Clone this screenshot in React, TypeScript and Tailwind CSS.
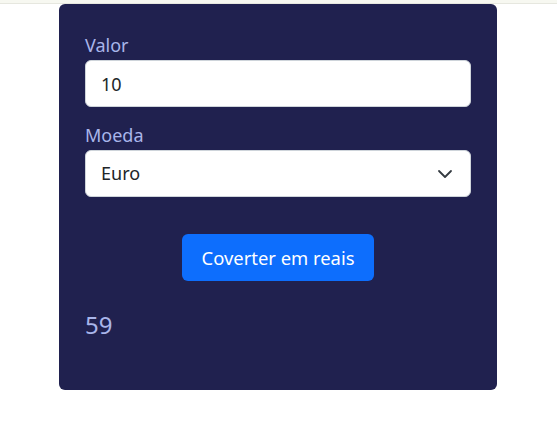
import React, { useState } from 'react';

const App = () => {
    const [valor, setValor] = useState('10');
    const [moeda, setMoeda] = useState('Euro');
    return (
        <div className="min-h-[431px] bg-white" style={{ fontFamily: '"Noto Sans", "Open Sans", sans-serif' }}>
            <div className="h-[4px] bg-[#f7f8f1] border-b border-[#e6e7df]"></div>
            <div className="flex justify-center pr-[1px]">
                <div className="w-[438px] bg-[#20214f] rounded-[6px] px-[26px] pt-[28px] pb-[49px]">
                    <label className="block text-[18px] leading-[26px] text-[#a9b5ea] mb-[2px]">Valor</label>
                    <input
                        className="block w-full h-[47px] rounded-[6px] bg-white border border-[#ced4da] px-[15px] text-[18px] text-[#212529] outline-none"
                        value={valor}
                        onChange={(e) => setValor(e.target.value)}
                    />
                    <label className="block text-[18px] leading-[26px] text-[#a9b5ea] mt-[15px] mb-[2px]">Moeda</label>
                    <div className="relative">
                        <select
                            className="block w-full h-[47px] appearance-none rounded-[6px] bg-white border border-[#ced4da] px-[15px] text-[18px] text-[#212529] outline-none"
                            value={moeda}
                            onChange={(e) => setMoeda(e.target.value)}
                        >
                            <option>Euro</option>
                            <option>Dólar</option>
                            <option>Libra</option>
                        </select>
                        <svg className="absolute right-[18px] top-1/2 -translate-y-1/2 pointer-events-none" width="16" height="12" viewBox="0 0 16 12">
                            <path d="m2 3 6 6 6-6" fill="none" stroke="#343a40" strokeWidth="1.8" strokeLinecap="round" strokeLinejoin="round" />
                        </svg>
                    </div>
                    <div className="flex justify-center mt-[37px]">
                        <button className="h-[47px] px-[20px] rounded-[6px] bg-[#0d6efd] text-white text-[18.4px]">Coverter em reais</button>
                    </div>
                    <p className="mt-[28px] text-[24px] leading-[32px] text-[#a9b5ea]">59</p>
                </div>
            </div>
        </div>
    );
};

export default App;
